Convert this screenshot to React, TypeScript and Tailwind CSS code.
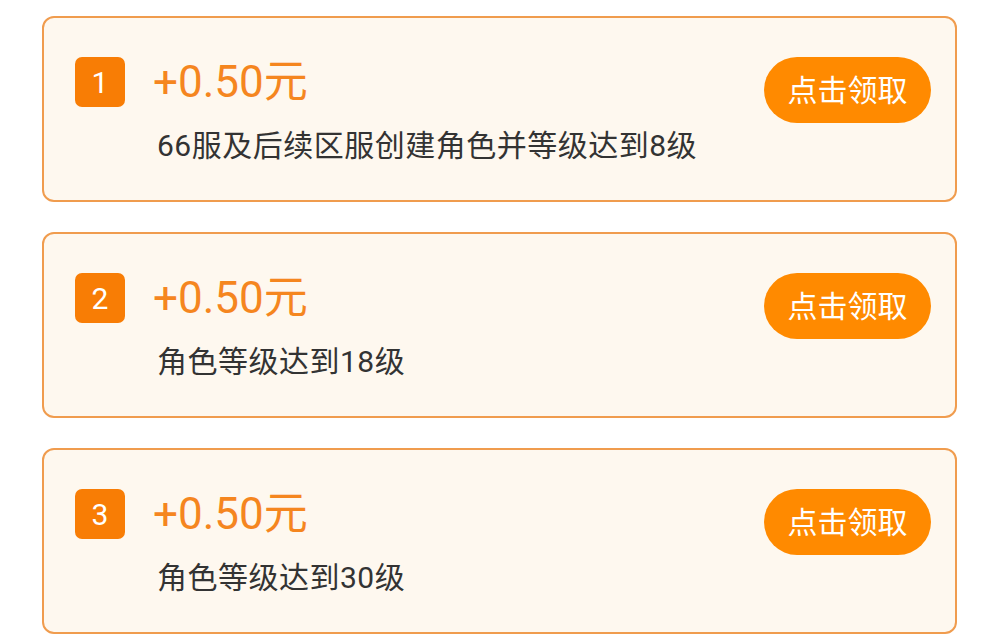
import React from 'react';

interface RewardItem {
  index: number;
  amount: string;
  desc: string;
}

const rewards: RewardItem[] = [
  { index: 1, amount: '+0.50元', desc: '66服及后续区服创建角色并等级达到8级' },
  { index: 2, amount: '+0.50元', desc: '角色等级达到18级' },
  { index: 3, amount: '+0.50元', desc: '角色等级达到30级' },
];

function RewardCard({ item }: { item: RewardItem }) {
  return (
    <div className="flex h-[186px] items-start rounded-[12px] border-2 border-[#f09c4e] bg-[#fef8ef] pl-[31px] pr-[24px] pt-[39px]">
      <div className="flex flex-1 flex-col">
        <div className="flex items-center">
          <div className="flex h-[50px] w-[50px] items-center justify-center rounded-[7px] bg-[#f87d05] text-[30px] text-white">
            {item.index}
          </div>
          <div className="ml-[28px] text-[44px] leading-[50px] text-[#f5861f]">
            {item.amount}
          </div>
        </div>
        <div className="ml-[82px] mt-[19px] text-[30px] leading-[40px] tracking-[0.5px] text-[#333333]">
          {item.desc}
        </div>
      </div>
      <button className="flex h-[66px] w-[167px] items-center justify-center rounded-full bg-[#ff8a00] text-[30px] text-white">
        点击领取
      </button>
    </div>
  );
}

export default function App() {
  return (
    <div
      className="flex min-h-[644px] w-[1000px] flex-col gap-[30px] bg-white pl-[42px] pr-[43px] pt-[16px]"
      style={{ fontFamily: 'Roboto, "Noto Sans CJK SC", sans-serif' }}
    >
      {rewards.map((r) => (
        <RewardCard key={r.index} item={r} />
      ))}
    </div>
  );
}
